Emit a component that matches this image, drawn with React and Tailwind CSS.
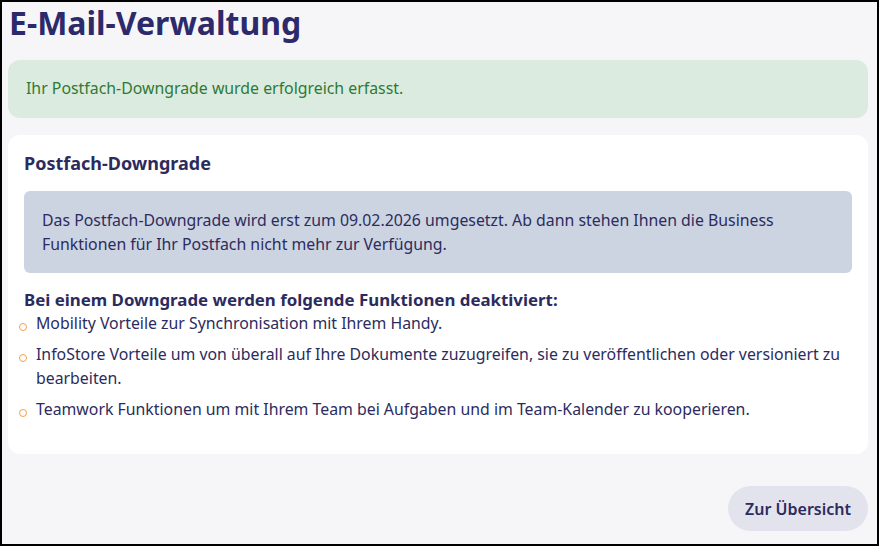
export default function App() {
  const items = [
    "Mobility Vorteile zur Synchronisation mit Ihrem Handy.",
    "InfoStore Vorteile um von überall auf Ihre Dokumente zuzugreifen, sie zu veröffentlichen oder versioniert zu bearbeiten.",
    "Teamwork Funktionen um mit Ihrem Team bei Aufgaben und im Team-Kalender zu kooperieren.",
  ];
  return (
    <div
      className="w-[879px] h-[546px] border-2 border-black bg-[#f6f6f9] flex flex-col pl-[6px] pr-[9px] pt-[1px] overflow-hidden"
      style={{ fontFamily: '"Noto Sans", "Open Sans", sans-serif' }}
    >
      <h1 className="text-[32px] font-bold leading-[40px] text-[#2d2a6b] pl-[1px] mb-[17px]">
        E-Mail-Verwaltung
      </h1>
      <div className="h-[58px] rounded-[12px] bg-[#dcebdf] flex items-center px-[18px] mb-[17px]">
        <span className="text-[15.85px] text-[#2e7a35]">
          Ihr Postfach-Downgrade wurde erfolgreich erfasst.
        </span>
      </div>
      <div className="bg-white rounded-[12px] px-[16px] pt-[16px] pb-[26px] text-[#2c2b5e]">
        <h2 className="text-[18px] font-bold leading-[24px] mb-[16px]">Postfach-Downgrade</h2>
        <div className="bg-[#cdd4e1] rounded-[6px] px-[18px] py-[17px] text-[15.85px] leading-[24px]">
          Das Postfach-Downgrade wird erst zum 09.02.2026 umgesetzt. Ab dann stehen Ihnen die Business
          Funktionen für Ihr Postfach nicht mehr zur Verfügung.
        </div>
        <p className="mt-[16px] text-[16.85px] font-bold leading-[22px]">
          Bei einem Downgrade werden folgende Funktionen deaktiviert:
        </p>
        <ul>
          {items.map((t, i) => (
            <li key={i} className="flex -ml-[5px] mb-[7px] text-[15.85px] leading-[24px]">
              <span className="w-[17px] shrink-0">
                <span className="block w-[8px] h-[8px] mt-[12px] rounded-full border-[1.5px] border-[#f7a04a]"></span>
              </span>
              <span>{t}</span>
            </li>
          ))}
        </ul>
      </div>
      <div className="flex justify-end mt-[32px]">
        <button className="h-[45px] px-[17px] rounded-full bg-[#e3e3ed] text-[16px] font-semibold text-[#2c2b5e]">
          Zur Übersicht
        </button>
      </div>
    </div>
  );
}
